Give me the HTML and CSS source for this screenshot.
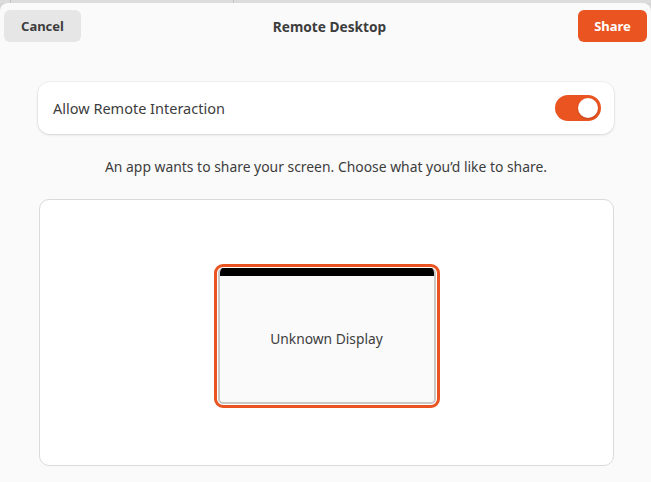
FILE: index.html
```html
<!DOCTYPE html>
<html>
<head>
<meta charset="utf-8">
<link rel="stylesheet" href="styles.css">
</head>
<body>
<div class="backdrop"><span class="line l1"></span><span class="line l2"></span></div>
<div class="dialog">
  <header class="header">
    <button class="btn btn-cancel">Cancel</button>
    <div class="title">Remote Desktop</div>
    <button class="btn btn-share">Share</button>
  </header>
  <main class="content">
    <div class="row-card">
      <span class="row-label">Allow Remote Interaction</span>
      <span class="switch"><span class="knob"></span></span>
    </div>
    <p class="desc">An app wants to share your screen. Choose what you’d like to share.</p>
    <div class="frame">
      <div class="monitor">
        <div class="monitor-inner">
          <div class="monitor-bar"></div>
          <div class="monitor-label">Unknown Display</div>
        </div>
      </div>
    </div>
  </main>
</div>
</body>
</html>
```
FILE: styles.css
```css
* { box-sizing: border-box; }
html, body { margin: 0; padding: 0; }
body {
  width: 651px;
  height: 482px;
  overflow: hidden;
  background: #d6d6d6;
  font-family: "Noto Sans", "Open Sans", sans-serif;
  color: #3d3d3d;
  position: relative;
}
.backdrop {
  height: 3px;
  background: #dcdcdc;
  position: relative;
}
.line { position: absolute; top: 0; width: 1px; height: 3px; background: #c4c4c4; }
.l1 { left: 10px; }
.l2 { left: 233px; }
.dialog {
  height: 479px;
  background: #fafafa;
  border-radius: 8px 8px 0 0;
}
.header {
  display: flex;
  align-items: center;
  justify-content: space-between;
  padding: 7px 4px 0 4px;
  height: 39px;
}
.btn {
  border: none;
  font-family: inherit;
  font-weight: 700;
  font-size: 13px;
  height: 32px;
  border-radius: 6px;
  padding: 0;
}
.btn-cancel { width: 77px; background: #e6e6e6; color: #3d3d3d; }
.btn-share { width: 69px; background: #e95420; color: #fff; }
.title { font-weight: 700; font-size: 13.7px; color: #3d3d3d; }
.content {
  padding: 40px 37px 0 38px;
  display: flex;
  flex-direction: column;
}
.row-card {
  height: 52px;
  background: #fff;
  border-radius: 12px;
  box-shadow: 0 0 0 1px rgba(0,0,0,0.03), 0 1px 3px rgba(0,0,0,0.12);
  display: flex;
  align-items: center;
  justify-content: space-between;
  padding: 0 13px 0 15px;
}
.row-label { font-size: 14.5px; color: #3d3d3d; }
.switch {
  width: 46px;
  height: 26px;
  border-radius: 13px;
  background: #e95420;
  display: flex;
  align-items: center;
  justify-content: flex-end;
  padding: 0 3px;
}
.knob { width: 20px; height: 20px; border-radius: 50%; background: #fff; box-shadow: 0 1px 2px rgba(0,0,0,0.2); }
.desc {
  margin: 24px 0 0 0;
  text-align: center;
  font-size: 13.9px;
  line-height: 18px;
  color: #3d3d3d;
}
.frame {
  margin: 23px 0 0 1px;
  height: 267px;
  background: #fff;
  border: 1px solid #dadada;
  border-radius: 10px;
  display: flex;
  align-items: center;
  justify-content: center;
  padding-top: 7px;
}
.monitor {
  width: 226px;
  height: 144px;
  border: 3px solid #e95420;
  border-radius: 9px;
  padding: 1px;
  background: #fff;
}
.monitor-inner {
  height: 100%;
  border: 2px solid #c8c8c8;
  border-top: none;
  border-radius: 5px;
  background: #fafafa;
  overflow: hidden;
  display: flex;
  flex-direction: column;
}
.monitor-bar { height: 8px; background: #000; }
.monitor-label {
  flex: 1;
  display: flex;
  align-items: center;
  justify-content: center;
  font-size: 13.8px;
  color: #3d3d3d;
  padding-bottom: 2px;
}
```
